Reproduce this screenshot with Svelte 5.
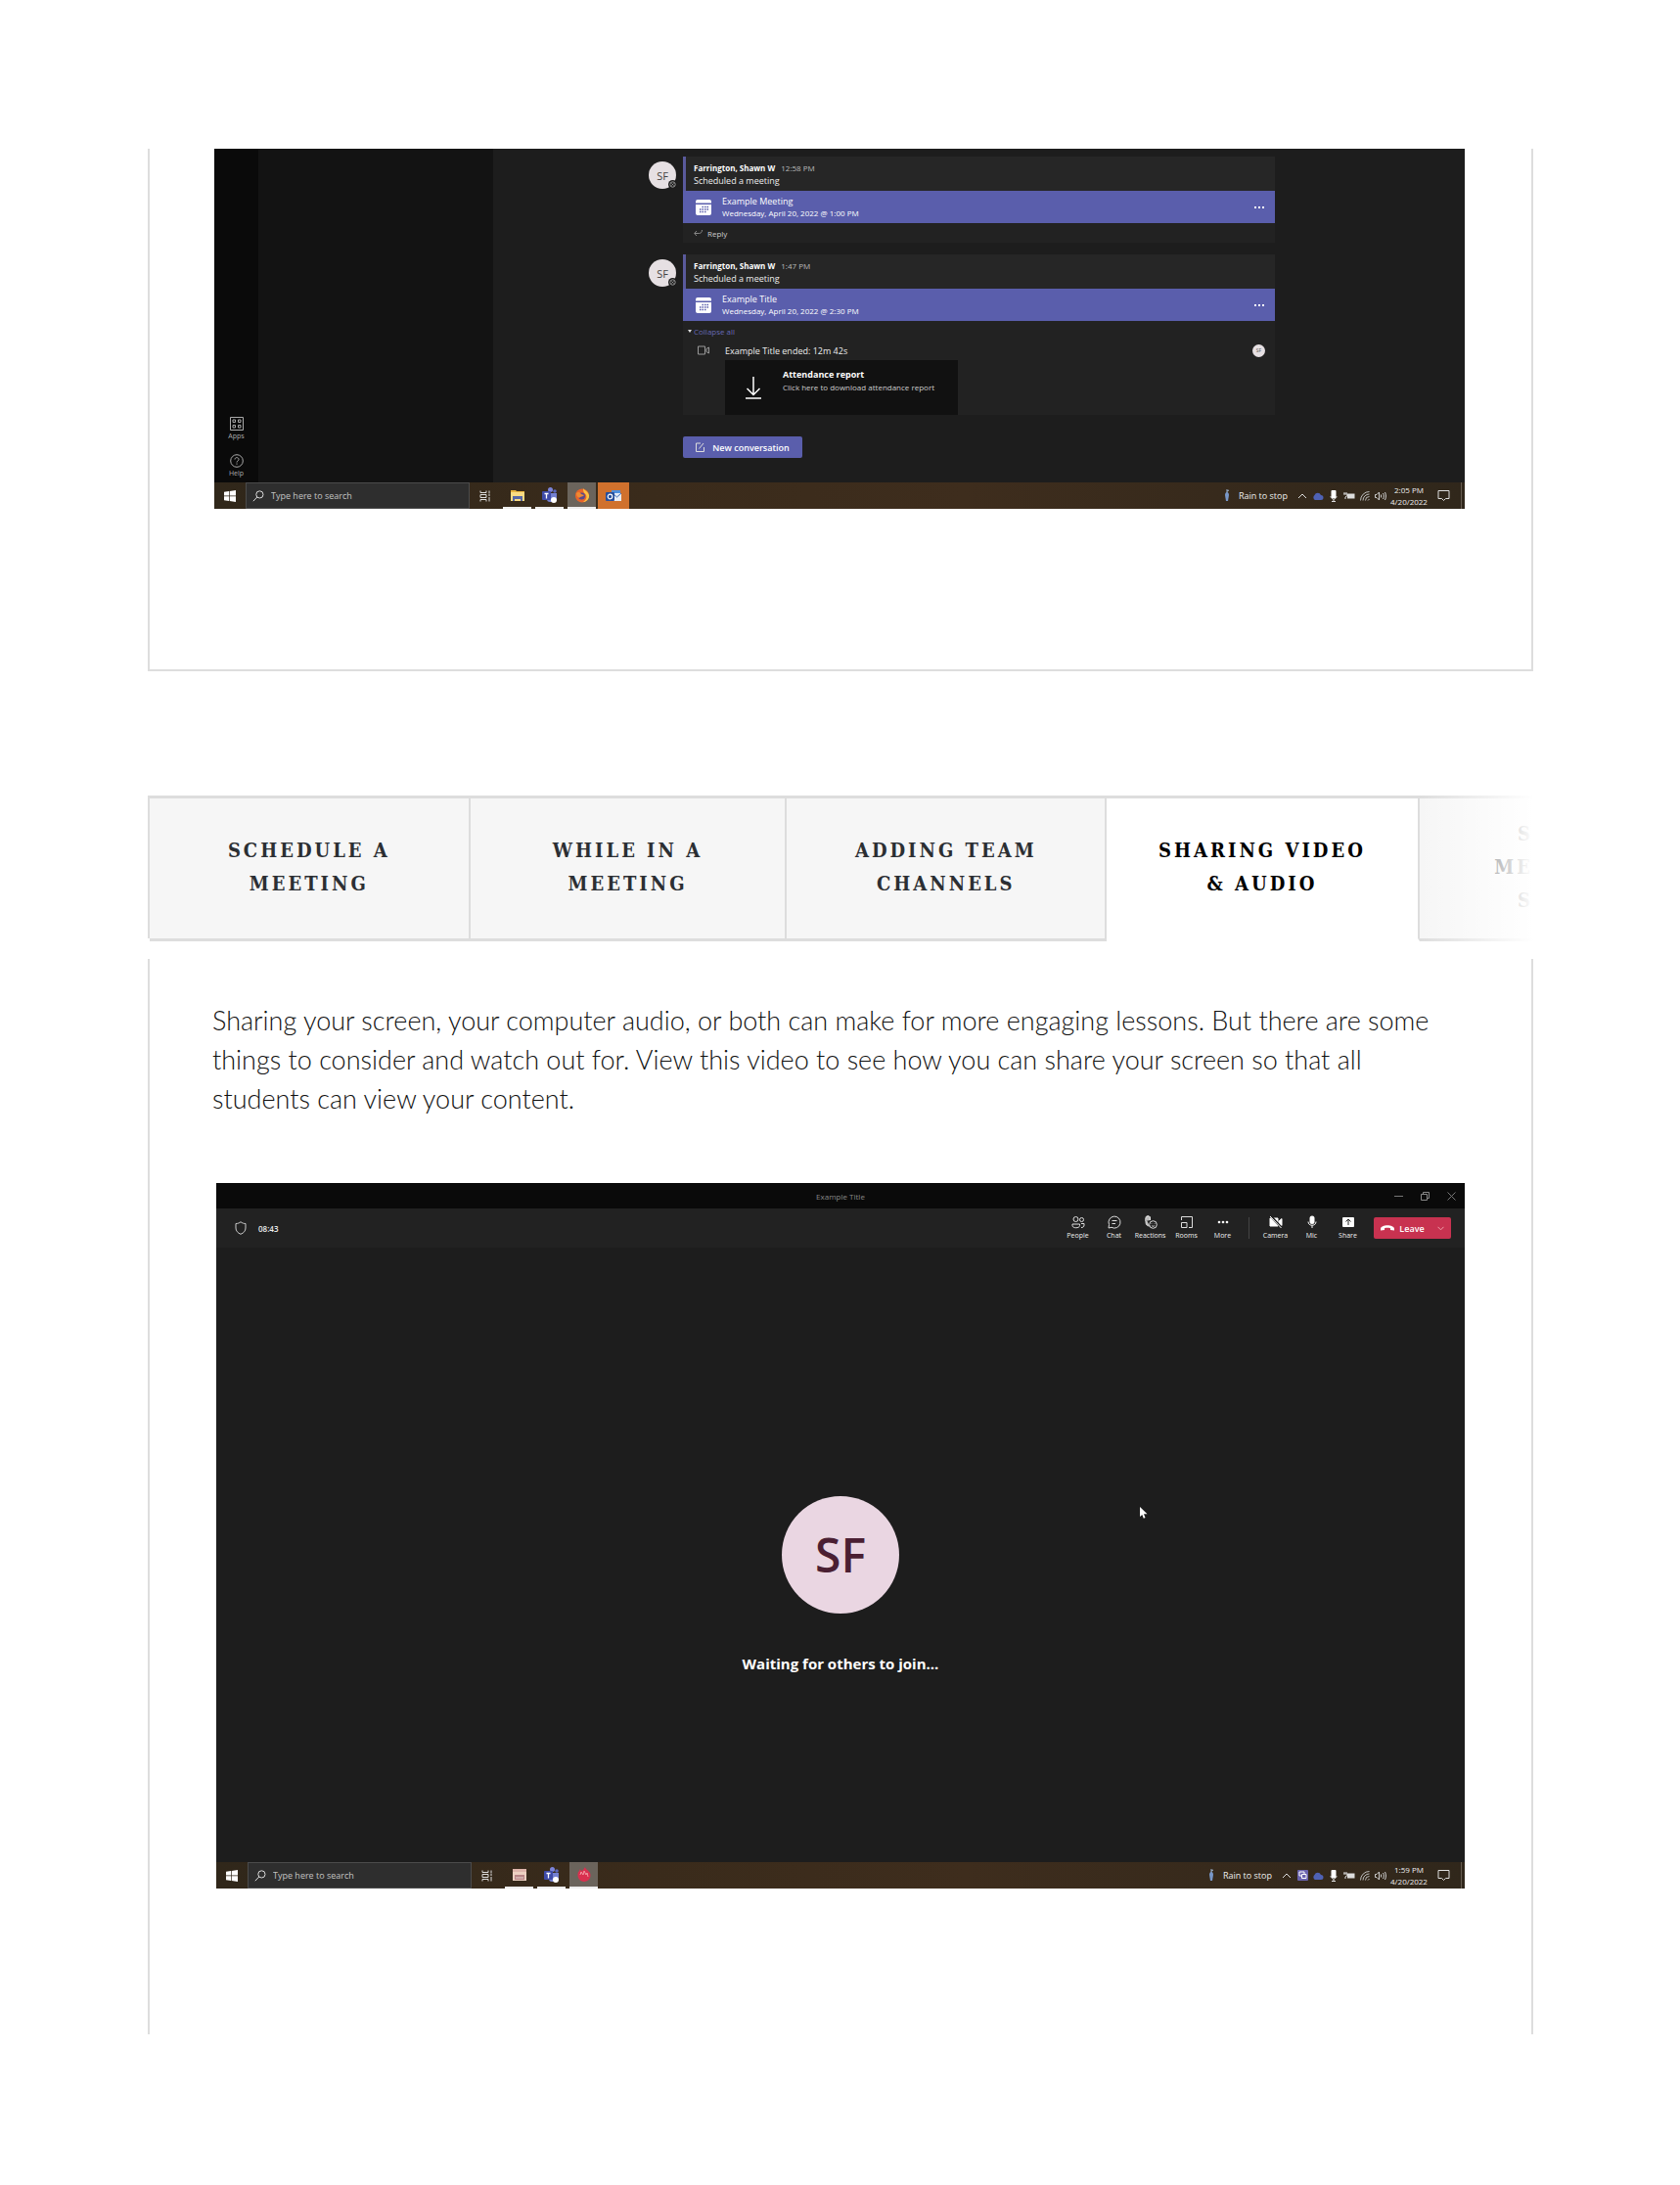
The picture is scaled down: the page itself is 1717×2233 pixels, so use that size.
<script>
	const tabs = [
		{ lines: ['Schedule a', 'Meeting'], grow: 328 },
		{ lines: ['While in a', 'Meeting'], grow: 324 },
		{ lines: ['Adding Team', 'Channels'], grow: 327 },
		{ lines: ['Sharing Video', '& Audio'], grow: 320 },
		{ lines: ['S', 'ME', 'S'], grow: 117, last: true }
	];

	let active = $state(3);

	const meetings = [
		{ time: '12:58 PM', title: 'Example Meeting', date: 'Wednesday, April 20, 2022 @ 1:00 PM' },
		{ time: '1:47 PM', title: 'Example Title', date: 'Wednesday, April 20, 2022 @ 2:30 PM', ended: true }
	];
</script>

{#snippet taskbar(id, time, apps, sharing)}
	<div class="taskbar">
		<button class="start" aria-label="Start">
			<svg width="12" height="12" viewBox="0 0 12 12" fill="#fff"><path d="M0 1.7 5 1v4.6H0zM5.7.9 12 0v5.6H5.7zM0 6.3h5V11l-5-.7zM5.7 6.3H12V12l-6.3-.9z" /></svg>
		</button>
		<div class="search">
			<label for={id} aria-label="Search">
				<svg width="12" height="12" viewBox="0 0 12 12" fill="none" stroke="#ddd"><circle cx="7.4" cy="4.4" r="3.6" /><path d="M4.8 7 .8 11.2" /></svg>
			</label>
			<input {id} type="text" placeholder="Type here to search" />
		</div>
		<button class="app" aria-label="Task view">
			<svg width="12" height="12" viewBox="0 0 12 12" fill="none" stroke="#ddd"><path d="M1 .5v2h6v-2M1 11.5v-2h6v2M1 4.500h6v3H1zM10 .5v3M10 7v4.500M9 5h2" /></svg>
		</button>
		{#each apps as app}
			<button class="app {app}" aria-label={app}>
				{#if app === 'files'}
					<svg width="16" height="14" viewBox="0 0 16 14"><path d="M1 2h5l1 1h8v10H1z" fill="#e8b33f" /><path d="M1 4h14v9H1z" fill="#fadb83" /><path d="M3 8h10v5h-2v-2H5v2H3z" fill="#5667a5" /></svg>
				{:else if app === 'folder'}
					<svg width="16" height="14" viewBox="0 0 16 14"><path d="M1 1h14v12H1z" fill="#dfb6ac" /><path d="M1 4h14v9H1z" fill="#edd1c2" /><path d="M3 7h10v5H3z" fill="#b98587" /><path d="M4 10h8" stroke="#e8d6d0" /></svg>
				{:else if app === 'teams'}
					<svg width="18" height="18" viewBox="0 0 18 18"><circle cx="9.500" cy="3.500" r="2.500" fill="#7b83d8" /><circle cx="14" cy="5" r="1.800" fill="#5b66bd" /><path d="M6 7h10v5a4 4 0 0 1-4 4H9a3 3 0 0 1-3-3z" fill="#7480d0" /><rect x="1" y="5" width="9" height="9" rx="1" fill="#3e4ba8" /><path d="M3.500 7.500h4M5.500 7.500v5" stroke="#fff" stroke-width="1.300" /><circle cx="13" cy="14" r="3" fill="#fff" /></svg>
				{:else if app === 'firefox'}
					<svg width="16" height="16" viewBox="0 0 16 16"><circle cx="8" cy="8.500" r="7" fill="#e8642a" /><path d="M9 1c1 2 5 3 6 7 .6 4-3 7-6 7 3-2 4-4 3-7-1-2-3-2-3-7z" fill="#fbc243" /><circle cx="7.500" cy="9" r="3.500" fill="#5a4a8c" /><path d="M2 6c2-2 4-1 5 1l3 1c-1 2-4 1-5 3C3 10 2 8 2 6z" fill="#f08a32" /></svg>
				{:else if app === 'outlook'}
					<svg width="16" height="14" viewBox="0 0 16 14"><path d="M6 1h9v11H6z" fill="#4f8fdc" /><path d="M7 4h9v8H7z" fill="#e7edf7" /><path d="m7 4 4.500 4L16 4" stroke="#3668b5" fill="none" /><rect y="3" width="9" height="9" rx="1" fill="#274f9c" /><circle cx="4.500" cy="7.500" r="2.300" fill="none" stroke="#fff" stroke-width="1.200" /></svg>
				{:else}
					<svg width="16" height="16" viewBox="0 0 16 16"><path d="M2 5c1 0 1-2 2-3 0 2 2 2 3 1l2-3c0 2 3 3 5 6 2 5-2 9-6 9S0 11 2 5z" fill="#d9304f" /><path d="m4 8 1-3 2 3 1-4 2 4 1-2 1 4" fill="none" stroke="#f397a1" /></svg>
				{/if}
			</button>
		{/each}
		<div class="tray">
			<button class="weather">
				<svg width="6" height="16" viewBox="0 0 6 16" fill="none"><path d="M3 3v10M3 1v2l2-1" stroke="#9fb7d3" /><path d="M1 7c0-4 4-4 4 0L4 13H2z" fill="#7897c8" /></svg>
				Rain to stop
			</button>
			<button class="slot" aria-label="Show hidden icons"><svg width="10" height="6" viewBox="0 0 10 6" fill="none" stroke="#ddd"><path d="m1 5 4-4 4 4" /></svg></button>
			{#if sharing}
				<span class="slot"><svg width="11" height="11" viewBox="0 0 11 11"><rect width="11" height="11" rx="1" fill="#6a63ae" /><path d="M2 2h5v2M2 2v4h2M4.500 4.500h4.500v4H4.500z" fill="none" stroke="#fff" /></svg></span>
			{/if}
			<span class="slot"><svg width="12" height="8" viewBox="0 0 12 8"><path d="M3 8a3 3 0 0 1-.5-5A3.500 3.500 0 0 1 9 3a2.500 2.500 0 0 1 0 5z" fill="#4f62b5" /></svg></span>
			<span class="slot"><svg width="8" height="12" viewBox="0 0 8 12"><rect x="1.500" width="5" height="8" rx="1" fill="#fff" /><path d="M1 6c0 4 6 4 6 0M4 9v3M2 11.500h4" stroke="#ddd" fill="none" /></svg></span>
			<span class="slot"><svg width="12" height="8" viewBox="0 0 12 8"><path d="M4 1.500h7.500v5H4z" fill="#ddd" /><path d="M1 0v2M3 0v2M0 2h4v1.500L2 5v2" stroke="#ddd" fill="none" /></svg></span>
			<span class="slot"><svg width="10" height="10" viewBox="0 0 10 10" fill="none" stroke="#bbb"><path d="M.5 9.500A9 9 0 0 1 9.500.5M3 9.500A6.500 6.500 0 0 1 9.500 3M5.500 9.500a4 4 0 0 1 4-4M8 9.500 9.500 8" /></svg></span>
			<span class="slot"><svg width="12" height="10" viewBox="0 0 12 10" fill="none" stroke="#ccc"><path d="M.5 3.500H2L4.500 1v8L2 6.500H.5zM6.500 3.500v3M8.500 2c1 2 1 4 0 6M10.500 1c1.300 3 1.300 5 0 8" /></svg></span>
			<div class="clock"><span>{time}</span><span>4/20/2022</span></div>
			<button class="notes" aria-label="Notifications"><svg width="13" height="13" viewBox="0 0 13 13" fill="none" stroke="#ddd"><path d="M1 1.500h11v8H8.500l-2 2-2-2H1z" /></svg></button>
		</div>
	</div>
{/snippet}

{#snippet calendar()}
	<svg width="16" height="16" viewBox="0 0 16 16"><path d="M2 0h12q2 0 2 2v1.500H0V2q0-2 2-2zM0 5h16v9q0 2-2 2H2q-2 0-2-2z" fill="#fff" /><path d="M6.500 7.500H8M9 7.500h1.500M11.500 7.500H13M4 10h1.500M6.500 10H8M9 10h1.500M11.500 10H13M4 12.500h1.500M6.500 12.500H8M9 12.500h1.500" stroke="#5a5eac" stroke-width="1.500" /></svg>
{/snippet}

{#snippet tool(label)}
	<button class="tool">
		<svg width="14" height="14" viewBox="0 0 14 14" fill="none" stroke="#ddd">
			{#if label === 'People'}
				<circle cx="4.500" cy="4" r="2.500" /><circle cx="10.500" cy="4.500" r="2" /><path d="M1 9h7.500v1.500c0 3-7.500 3-7.500 0zM10 8.500h3V10c0 2-1.500 2.500-3 2.500" />
			{:else if label === 'Chat'}
				<path d="M1 13 1.500 9.500A6 6 0 1 1 4 12.300zM4.500 5.500h5M4.500 8.500h3.500" />
			{:else if label === 'Reactions'}
				<path d="M2 3v4c0 3 2 4 4 4M2 6V2c0-1 1.500-1 1.500 0V1c0-1 1.500-1 1.500 0v1c0-1 1.500-1 1.500 0v3" fill="#bbb" /><circle cx="9.500" cy="9.500" r="3.800" fill="#222" /><path d="M8 8.500v.5M11 8.500v.5M8 10.500c1 1 2 1 3 0" />
			{:else if label === 'Rooms'}
				<path d="M1.500 5V1.500h11v11H9M1.500 7.500H7v5H1.500z" />
			{:else if label === 'More'}
				<g fill="#fff" stroke="none"><circle cx="3" cy="7" r="1.300" /><circle cx="7" cy="7" r="1.300" /><circle cx="11" cy="7" r="1.300" /></g>
			{:else if label === 'Camera'}
				<path d="M1 3h8v8H1zM10 6l3-2.500v7L10 8.500z" fill="#fff" stroke="#fff" /><path d="m2 1 11 12" stroke="#222" stroke-width="2.500" /><path d="m1 1 11.500 12" stroke="#fff" />
			{:else if label === 'Mic'}
				<rect x="4.500" y=".5" width="5" height="8.500" rx="2.500" fill="#fff" stroke="none" /><path d="M3 6.500c0 5 8 5 8 0M7 10.500V13" stroke="#fff" />
			{:else}
				<rect x="1" y="2" width="12" height="10" rx="1" fill="#fff" stroke="none" /><path d="M7 10V4.500M4.500 6.500 7 4l2.500 2.500" stroke="#222" />
			{/if}
		</svg>
		{label}
	</button>
{/snippet}

<main>
	<section class="panel first">
		<div class="shot">
			<div class="teams-window">
				<nav class="rail">
					<button>
						<svg width="14" height="14" viewBox="0 0 14 14" fill="none" stroke="#aaa"><path d="M.5.5h13v13H.5zM3 3h2.500v2.500H3zM8.500 3H11v2.500H8.500zM3 8.500h2.500V11H3zM8.500 8.500H11V11H8.500z" /></svg>
						Apps
					</button>
					<button>
						<svg width="14" height="14" viewBox="0 0 14 14" fill="none" stroke="#aaa"><circle cx="7" cy="7" r="6.300" /><path d="M5 5.500c0-2.500 4-2.500 4 0C9 7 7 7 7 8.500M7 9.500v1.200" /></svg>
						Help
					</button>
				</nav>
				<div class="channels"></div>
				<div class="feed">
					{#each meetings as m}
						<div class="post">
							<div class="avatar">SF<svg width="9" height="9" viewBox="0 0 9 9"><circle cx="4.500" cy="4.500" r="4.500" fill="#1d1d1d" /><circle cx="4.500" cy="4.500" r="2.700" fill="none" stroke="#999" /><path d="m3.500 3.500 2 2m0-2-2 2" stroke="#999" /></svg></div>
							<article class="card">
								<header>
									<p class="who"><b>Farrington, Shawn W</b> <span>{m.time}</span></p>
									<p>Scheduled a meeting</p>
								</header>
								<div class="banner">
									{@render calendar()}
									<div class="banner-text">
										<p>{m.title}</p>
										<p class="date">{m.date}</p>
									</div>
									<button aria-label="More options"><svg width="10" height="2" viewBox="0 0 10 2" fill="#fff"><path d="M0 0h2v2H0zM4 0h2v2H4zM8 0h2v2H8z" /></svg></button>
								</div>
								{#if m.ended}
									<button class="collapse"><svg width="4" height="3" viewBox="0 0 4 3"><path d="M0 0h4L2 3z" fill="#ddd" /></svg>Collapse all</button>
									<div class="ended">
										<svg width="12" height="10" viewBox="0 0 12 10" fill="none" stroke="#999"><path d="M.5 1h7v8h-7zM9 3.500 11.500 2v6L9 6.500z" /></svg>
										<p>Example Title ended: 12m 42s</p>
										<span class="mini">SF</span>
									</div>
									<button class="report">
										<svg width="16" height="23" viewBox="0 0 16 23" fill="none" stroke="#fff" stroke-width="1.500"><path d="M8 0v18M1.500 12 8 18.500l6.500-6.500M0 22h16" /></svg>
										<span><b>Attendance report</b><small>Click here to download attendance report</small></span>
									</button>
								{:else}
									<button class="reply"><svg width="9" height="6" viewBox="0 0 9 6" fill="none" stroke="#888"><path d="M8.500 0c0 2-1 3.500-3 3.500H1M3 1 .7 3.500 3 6" /></svg>Reply</button>
								{/if}
							</article>
						</div>
					{/each}
					<button class="new">
						<svg width="9" height="10" viewBox="0 0 9 10" fill="none" stroke="#ddd"><path d="M5 1H.5v8.500h8V5M3.500 6.500 8 1" /></svg>
						New conversation
					</button>
				</div>
			</div>
			{@render taskbar('search-top', '2:05 PM', ['files', 'teams', 'firefox', 'outlook'], false)}
		</div>
	</section>

	<div class="tabs" role="tablist">
		{#each tabs as tab, i}
			<button
				role="tab"
				aria-selected={i === active}
				class:active={i === active}
				class:last={tab.last}
				style="flex-grow: {tab.grow}"
				onclick={() => (active = i)}
			>
				{#each tab.lines as line}<span>{line}</span>{/each}
			</button>
		{/each}
	</div>

	<section class="panel second" role="tabpanel">
		<p class="intro">
			Sharing your screen, your computer audio, or both can make for more engaging lessons. But there are some things to consider and watch out for. View this video to see how you can share your screen so that all students can view your content.
		</p>
		<div class="shot">
			<div class="titlebar">
				<span>Example Title</span>
				<div class="window-buttons">
					<button aria-label="Minimize"><svg width="9" height="9" viewBox="0 0 9 9" stroke="#777"><path d="M0 4.500h9" /></svg></button>
					<button aria-label="Restore"><svg width="9" height="9" viewBox="0 0 9 9" fill="none" stroke="#888"><path d="M.5 2.500h6v6h-6zM2.500 2.500v-2h6v6h-2" /></svg></button>
					<button aria-label="Close"><svg width="9" height="9" viewBox="0 0 9 9" stroke="#777"><path d="m.5.5 8 8m0-8-8 8" /></svg></button>
				</div>
			</div>
			<div class="toolbar">
				<svg width="12" height="14" viewBox="0 0 12 14" fill="none" stroke="#ccc"><path d="M6 .7c1.500 1.300 3 1.800 5 1.800V7c0 3-2 5-5 6.300C3 12 1 10 1 7V2.500c2 0 3.500-.5 5-1.800z" /></svg>
				<span class="timer">08:43</span>
				{#each ['People', 'Chat', 'Reactions', 'Rooms', 'More'] as label}{@render tool(label)}{/each}
				<span class="divider"></span>
				{#each ['Camera', 'Mic', 'Share'] as label}{@render tool(label)}{/each}
				<button class="leave">
					<svg width="14" height="6" viewBox="0 0 14 6" fill="#fff"><path d="M0 4c0-5 14-5 14 0v1.500l-4-.5V3.200C8 2.600 6 2.600 4 3.200V5L0 5.500z" /></svg>
					Leave
					<svg width="7" height="5" viewBox="0 0 7 5" fill="none" stroke="#f0a0aa"><path d="m.5.8 3 3 3-3" /></svg>
				</button>
			</div>
			<div class="stage">
				<div class="big-avatar">SF</div>
				<p>Waiting for others to join...</p>
				<svg class="cursor" width="8" height="12" viewBox="0 0 8 12" fill="#fff"><path d="M0 0v10l2.300-2 1.500 3.700 1.700-.7L4 7.300h3.500z" /></svg>
			</div>
			{@render taskbar('search-bottom', '1:59 PM', ['folder', 'teams', 'red'], true)}
		</div>
	</section>
</main>

<style>
	:global(body) {
		margin: 0;
		background: #fff;
	}

	main {
		padding: 152px 150px 152px 151px;
		font-family: "Open Sans", "Noto Sans", sans-serif;
		font-size: 9px;
		color: #eee;
	}

	p {
		margin: 0;
	}

	button {
		display: flex;
		align-items: center;
		justify-content: center;
		padding: 0;
		border: 0;
		background: none;
		color: inherit;
		font: inherit;
		cursor: pointer;
	}

	svg {
		flex: none;
	}

	.panel {
		border: solid #ddd;
		border-width: 0 2px;
		padding: 0 68px 0 66px;
	}

	.first {
		padding-bottom: 164px;
		border-bottom-width: 2px;
	}

	.second {
		margin-top: 21px;
		padding: 43px 68px 149px;
	}

	.shot {
		background: #1d1d1d;
	}

	/* chat window */
	.teams-window {
		display: flex;
		height: 341px;
	}

	.rail {
		display: flex;
		flex-direction: column;
		justify-content: flex-end;
		gap: 13px;
		box-sizing: border-box;
		width: 45px;
		padding-bottom: 4px;
		background: #0a0a0a;
	}

	.rail button {
		flex-direction: column;
		gap: 1px;
		font-size: 7px;
		line-height: 10px;
		color: #aaa;
	}

	.channels {
		width: 240px;
		background: #131313;
	}

	.feed {
		flex: 1;
		padding: 8px 194px 0 159px;
	}

	.post {
		display: flex;
		align-items: flex-start;
		gap: 7px;
		margin-bottom: 12px;
	}

	.avatar {
		position: relative;
		display: grid;
		place-items: center;
		width: 28px;
		height: 28px;
		margin-top: 5px;
		border-radius: 50%;
		background: #e6e0e3;
		color: #444;
		font-size: 11px;
	}

	.avatar svg {
		position: absolute;
		right: -1px;
		bottom: 0;
	}

	.card {
		flex: 1;
		background: #222;
	}

	.card header {
		height: 30px;
		padding: 5px 0 0 8px;
		border-left: 3px solid #5a5a9c;
		background: #262626;
		line-height: 13px;
	}

	.who {
		font-size: 8px;
	}

	.who b {
		color: #fff;
	}

	.who span {
		margin-left: 4px;
		color: #bbb;
	}

	.banner {
		display: flex;
		align-items: center;
		gap: 11px;
		height: 33px;
		padding: 0 11px 0 13px;
		background: #5a5eac;
		color: #fff;
		line-height: 13px;
	}

	.banner-text {
		flex: 1;
	}

	.date {
		font-size: 8px;
		line-height: 12px;
	}

	.reply {
		gap: 5px;
		height: 20px;
		padding-left: 11px;
		font-size: 8px;
		color: #ccc;
	}

	.collapse {
		gap: 2px;
		height: 20px;
		padding-left: 5px;
		font-size: 8px;
		color: #6669b5;
	}

	.ended {
		display: flex;
		align-items: center;
		height: 20px;
		padding: 0 10px 0 15px;
		gap: 16px;
	}

	.ended p {
		flex: 1;
	}

	.mini {
		width: 13px;
		height: 13px;
		border-radius: 50%;
		background: #e6e0e3;
		color: #555;
		font-size: 5px;
		line-height: 13px;
		text-align: center;
	}

	.report {
		justify-content: flex-start;
		gap: 22px;
		box-sizing: border-box;
		width: 238px;
		height: 56px;
		margin-left: 43px;
		padding-left: 21px;
		background: #111;
		text-align: left;
	}

	.report span {
		display: flex;
		flex-direction: column;
		padding-bottom: 14px;
		line-height: 13px;
	}

	.report b {
		color: #fff;
	}

	.report small {
		font-size: 8px;
		color: #ccc;
	}

	.new {
		gap: 8px;
		width: 122px;
		height: 22px;
		margin: 22px 0 0 35px;
		border-radius: 2px;
		background: #5a5eac;
		color: #fff;
		font-weight: 600;
	}

	/* taskbar */
	.taskbar {
		display: flex;
		height: 27px;
		background: linear-gradient(90deg, #30271a, #3a2b1b 35%, #3e2d1d 60%, #30271b);
	}

	.start {
		width: 32px;
	}

	.search {
		display: flex;
		align-items: center;
		box-sizing: border-box;
		width: 229px;
		gap: 7px;
		padding-left: 6px;
		border: 1px solid #4b4b4b;
		background: #2e2e2e;
	}

	.search label {
		display: flex;
	}

	.search input {
		flex: 1;
		min-width: 0;
		padding: 0;
		border: 0;
		background: none;
		color: #ccc;
		font: inherit;
	}

	.search input::placeholder {
		color: #c4c4c4;
	}

	.app {
		width: 32px;
	}

	.files,
	.folder,
	.teams,
	.firefox,
	.red {
		width: 29px;
		margin: 0 2px;
		border-bottom: 2px solid #eee;
	}

	.firefox,
	.red {
		background: #6b645c;
	}

	.outlook {
		background: #d0712d;
	}

	.tray {
		display: flex;
		align-items: center;
		margin-left: auto;
		margin-right: 3px;
		padding-right: 4px;
		border-right: 1px solid #665c50;
	}

	.weather {
		gap: 9px;
		margin-right: 7px;
	}

	.slot {
		display: flex;
		align-items: center;
		justify-content: center;
		width: 16px;
	}

	.clock {
		display: flex;
		flex-direction: column;
		width: 42px;
		font-size: 8px;
		line-height: 12px;
		text-align: center;
	}

	.notes {
		width: 28px;
	}

	/* tabs */
	.tabs {
		display: flex;
		height: 143px;
		margin-top: 127px;
		border-top: 3px solid #ddd;
		border-left: 2px solid #ddd;
		position: relative;
	}

	.tabs::after {
		content: "";
		position: absolute;
		top: -3px;
		right: 0;
		bottom: -3px;
		width: 117px;
		background: linear-gradient(90deg, transparent, #fff);
		pointer-events: none;
	}

	.tabs button {
		flex-direction: column;
		flex-basis: 0;
		height: 146px;
		padding-bottom: 4px;
		box-sizing: border-box;
		border: solid #ddd;
		border-width: 0 2px 3px 0;
		background: #f6f6f6;
		color: #2c2f33;
		font-family: "DejaVu Serif Condensed", "DejaVu Serif", serif;
		font-size: 20px;
		font-weight: bold;
		line-height: 34px;
		letter-spacing: 3px;
		text-transform: uppercase;
	}

	.tabs .active {
		border-bottom-color: transparent;
		background: #fff;
		color: #000;
	}

	.tabs .last {
		align-items: flex-end;
		border-right: 0;
	}

	/* video panel */
	.intro {
		margin-bottom: 66px;
		margin-left: -4px;
		color: #111;
		font-family: Lato, sans-serif;
		font-size: 27px;
		font-weight: 300;
		line-height: 40px;
	}

	.titlebar {
		display: grid;
		grid-template-columns: 1fr auto 1fr;
		align-items: center;
		height: 26px;
		background: #0a0a0a;
		color: #888;
		font-size: 8px;
	}

	.titlebar span {
		grid-column: 2;
	}

	.window-buttons {
		display: flex;
		justify-content: flex-end;
	}

	.window-buttons button {
		width: 27px;
	}

	.toolbar {
		display: flex;
		align-items: center;
		height: 40px;
		padding: 0 14px 0 19px;
		background: #222;
	}

	.timer {
		flex: 1;
		margin-left: 12px;
		font-size: 8px;
		font-weight: 600;
	}

	.tool {
		flex-direction: column;
		gap: 2px;
		width: 37px;
		font-size: 7px;
		line-height: 10px;
	}

	.divider {
		width: 1px;
		height: 22px;
		margin: 0 8px;
		background: #444;
	}

	.leave {
		gap: 5px;
		width: 79px;
		height: 22px;
		margin-left: 8px;
		border-radius: 2px;
		background: #c83250;
		color: #fff;
		font-weight: 600;
	}

	.leave svg:last-child {
		margin-left: 8px;
	}

	.stage {
		position: relative;
		display: flex;
		flex-direction: column;
		align-items: center;
		box-sizing: border-box;
		height: 628px;
		padding-top: 254px;
		color: #fff;
	}

	.stage p {
		margin-top: 41px;
		font-size: 15px;
		font-weight: 700;
		line-height: 20px;
	}

	.big-avatar {
		width: 120px;
		height: 120px;
		border-radius: 50%;
		background: #ead6e2;
		color: #4b1f33;
		font-size: 48px;
		font-weight: 600;
		line-height: 120px;
		text-align: center;
	}

	.cursor {
		position: absolute;
		top: 265px;
		left: 74%;
	}
</style>
